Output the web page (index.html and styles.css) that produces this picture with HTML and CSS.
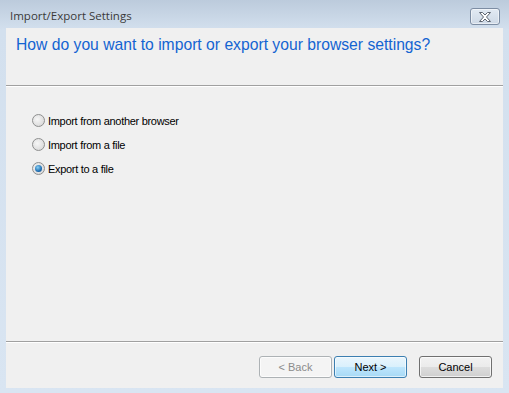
FILE: index.html
```html
<!DOCTYPE html>
<html lang="en">
<head>
    <meta charset="UTF-8">
    <title>Import/Export Settings</title>
    <link rel="stylesheet" href="styles.css">
</head>
<body>
<div class="window">
	<div class="titlebar">
		<span class="title">Import/Export Settings</span>
		<button class="close" aria-label="Close">
			<svg width="14" height="10" viewBox="0 0 14 10">
				<path d="M1.5 0.5 H4.5 L7 3 L9.5 0.5 H12.5 L8.5 5 L12.5 9.5 H9.5 L7 7 L4.5 9.5 H1.5 L5.5 5 Z" fill="#ffffff" stroke="#5c6470" stroke-width="1" stroke-linejoin="round"/>
			</svg>
		</button>
	</div>
	<div class="client">
		<div class="header">
			<h1 class="question">How do you want to import or export your browser settings?</h1>
		</div>
		<div class="content">
			<label class="option"><span class="radio"></span>Import from another browser</label>
			<label class="option"><span class="radio"></span>Import from a file</label>
			<label class="option"><span class="radio checked"></span>Export to a file</label>
		</div>
		<div class="buttons">
			<button class="btn disabled">&lt; Back</button>
			<button class="btn default">Next &gt;</button>
			<button class="btn cancel">Cancel</button>
		</div>
	</div>
</div>
</body>
</html>
```

FILE: styles.css
```css
html, body {
	margin: 0;
	padding: 0;
}
body {
	width: 509px;
	height: 393px;
	overflow: hidden;
}
.window {
	height: 393px;
	display: flex;
	flex-direction: column;
	background: linear-gradient(#bccbdc, #d3e0ee 30px, #d9e5f2);
	box-sizing: border-box;
}
.titlebar {
	height: 28px;
	display: flex;
	align-items: flex-start;
	justify-content: space-between;
	padding: 0 9px 0 10px;
}
.title {
	font-family: "Open Sans", "Noto Sans", sans-serif;
	font-size: 11.5px;
	color: #3a3a3a;
	margin-top: 8px;
}
.close {
	margin-top: 8px;
	width: 30px;
	height: 17px;
	padding: 0;
	border: 1px solid #7d8da3;
	border-radius: 3px;
	background: linear-gradient(#e2eaf3, #ced9e6);
	box-shadow: inset 0 0 0 1px rgba(255,255,255,0.5);
	display: flex;
	align-items: center;
	justify-content: center;
}
.client {
	flex: 1;
	margin: 0 6px 5px 6px;
	background: #f0f0f0;
	display: flex;
	flex-direction: column;
}
.header {
	height: 58px;
	border-bottom: 1px solid #a0a0a0;
	box-shadow: 0 1px 0 #ffffff;
	box-sizing: border-box;
	padding: 8px 0 0 10px;
}
.question {
	margin: 0;
	font-family: "Liberation Sans", Arial, sans-serif;
	font-weight: normal;
	font-size: 15.7px;
	color: #1464d2;
}
.content {
	flex: 1;
	display: flex;
	flex-direction: column;
	gap: 11px;
	padding: 28px 0 0 26px;
	border-bottom: 1px solid #a0a0a0;
	box-shadow: 0 1px 0 #ffffff;
}
.option {
	display: flex;
	align-items: center;
	height: 13px;
	font-family: "Liberation Sans", Arial, sans-serif;
	font-size: 11px;
	letter-spacing: -0.3px;
	color: #000;
}
.radio {
	width: 11px;
	height: 11px;
	border-radius: 50%;
	border: 1px solid #8e8f8f;
	background: radial-gradient(circle at 40% 40%, #f6f6f6, #d2d2d2);
	margin-right: 3px;
	position: relative;
}
.radio.checked::after {
	content: "";
	position: absolute;
	left: 2px;
	top: 2px;
	width: 7px;
	height: 7px;
	border-radius: 50%;
	background: radial-gradient(circle at 40% 35%, #8ad1f5, #1f6fb3 60%, #0b3f78);
}
.buttons {
	height: 46px;
	display: flex;
	align-items: flex-start;
	padding: 14px 11px 0 0;
	justify-content: flex-end;
	box-sizing: border-box;
}
.btn {
	width: 73px;
	height: 22px;
	padding: 0;
	font-family: "Liberation Sans", Arial, sans-serif;
	font-size: 11px;
	color: #000;
	border: 1px solid #707070;
	border-radius: 3px;
	background: linear-gradient(#f2f2f2, #ebebeb 50%, #dddddd 50%, #cfcfcf);
	box-shadow: inset 0 0 0 1px rgba(255,255,255,0.7);
}
.btn.disabled {
	color: #8b8b8b;
	border-color: #adb2b5;
	background: #f4f4f4;
}
.btn.default {
	margin-left: 2px;
	border-color: #3c7fb1;
	background: linear-gradient(#eaf6fd, #d9f0fc 50%, #bee6fd 50%, #a7d9f5);
	box-shadow: inset 0 0 0 1px rgba(255,255,255,0.6);
}
.btn.cancel {
	margin-left: 12px;
}
```
